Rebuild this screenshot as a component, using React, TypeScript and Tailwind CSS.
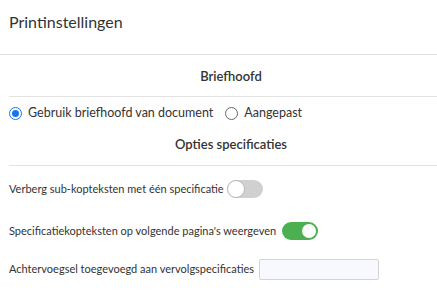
import React from "react";

function Toggle({ on }: { on: boolean }) {
  return on ? (
    <div className="flex h-[18px] w-[36px] items-center justify-end rounded-full bg-[#4caf50] px-[2px]">
      <div className="h-[14px] w-[14px] rounded-full bg-white" />
    </div>
  ) : (
    <div className="flex h-[18px] w-[36px] items-center rounded-full bg-[#d0d0d0]">
      <div className="h-[18px] w-[18px] rounded-full border border-[#b8b8b8] bg-white" />
    </div>
  );
}

export default function App() {
  return (
    <div className="h-[290px] w-[437px] overflow-hidden bg-white text-[#333]" style={{ fontFamily: "Lato, 'Noto Sans', sans-serif" }}>
      <div className="flex h-[55px] items-center border-b border-[#e3e3e3] pl-[9px] pb-[10px] text-[16px]">
        Printinstellingen
      </div>
      <div className="ml-[9px] w-[444px]">
        <div className="flex h-[42px] items-center justify-center border-b border-[#e3e3e3] pt-[2px] text-[13px] font-semibold">
          Briefhoofd
        </div>
        <div className="flex h-[32px] items-center gap-[6px] text-[12.5px]">
          <div className="flex h-[13px] w-[13px] items-center justify-center rounded-full border-[1.5px] border-[#1a73e8]">
            <div className="h-[7px] w-[7px] rounded-full bg-[#1a73e8]" />
          </div>
          <span>Gebruik briefhoofd van document</span>
          <div className="ml-[6px] h-[13px] w-[13px] rounded-full border border-[#666]" />
          <span>Aangepast</span>
        </div>
        <div className="flex h-[37px] items-center justify-center border-b border-[#e3e3e3] pb-[5px] text-[13px] font-semibold">
          Opties specificaties
        </div>
        <div className="flex flex-col text-[11px]">
          <div className="flex h-[46px] items-center gap-[3px]">
            <span>Verberg sub-kopteksten met één specificatie</span>
            <Toggle on={false} />
          </div>
          <div className="flex h-[38px] items-center gap-[6px]">
            <span>Specificatiekopteksten op volgende pagina's weergeven</span>
            <Toggle on={true} />
          </div>
          <div className="flex h-[38px] items-center gap-[5px]">
            <span>Achtervoegsel toegevoegd aan vervolgspecificaties</span>
            <div className="h-[21px] w-[120px] rounded-[2px] border border-[#d4d4d4] bg-[#f8f9fe]" />
          </div>
        </div>
      </div>
    </div>
  );
}
